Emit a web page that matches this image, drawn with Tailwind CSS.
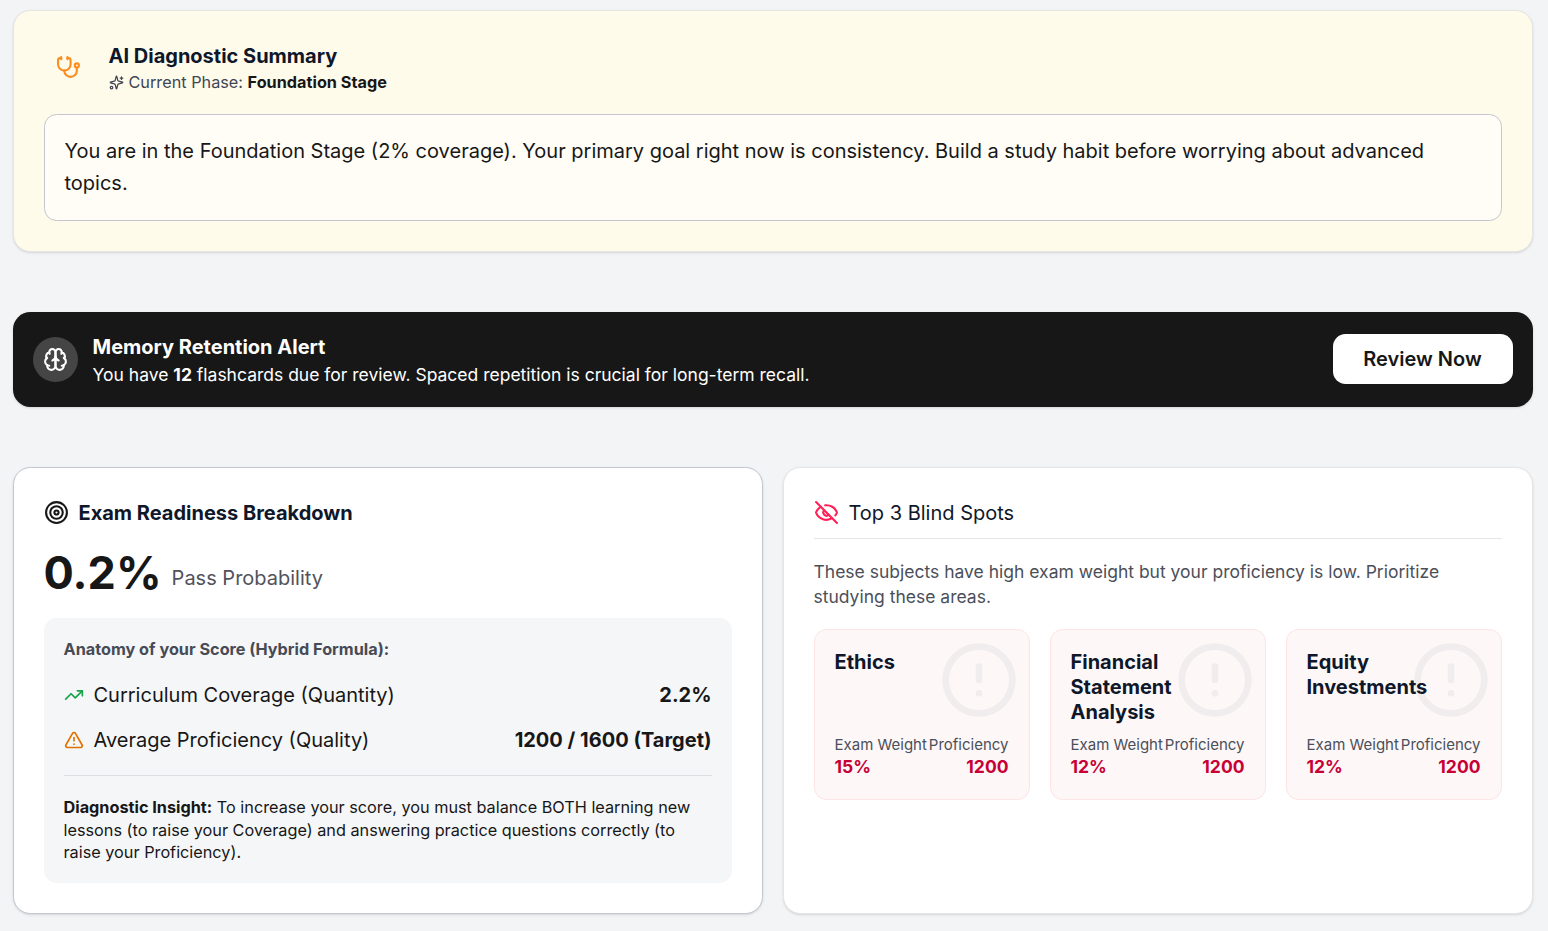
<!DOCTYPE html>
<html lang="en">
<head>
<meta charset="utf-8">
<title>Diagnostic Summary</title>
<script src="https://cdn.jsdelivr.net/npm/@tailwindcss/browser@4"></script>
</head>
<body class="h-[931px] overflow-hidden bg-[#f3f4f6] font-['Inter',sans-serif] text-[20px] text-[#171717]">
<svg class="hidden">
  <symbol id="alert" viewBox="0 0 24 24"><circle cx="12" cy="12" r="10"/><line x1="12" x2="12" y1="8" y2="12"/><line x1="12" x2="12.01" y1="16" y2="16"/></symbol>
</svg>
<main class="flex flex-col gap-[60px] pt-[10px] pr-[15.5px] pl-[12.5px]">
  <section class="h-[242px] rounded-[17.5px] border border-[#e5e5e5] bg-[#fffbeb] px-[30px] pt-[31px] pb-[30px] shadow-sm">
    <div class="flex h-[52px] items-start gap-[15px]">
      <div class="flex size-[50px] shrink-0 items-center justify-center text-[#fb8c1e]">
        <svg class="mr-[1px] size-[25px]" viewBox="0 0 24 24" fill="none" stroke="currentColor" stroke-width="2" stroke-linecap="round" stroke-linejoin="round"><path d="M11 2v2"/><path d="M5 2v2"/><path d="M5 3H4a2 2 0 0 0-2 2v4a6 6 0 0 0 12 0V5a2 2 0 0 0-2-2h-1"/><path d="M8 15a6 6 0 0 0 12 0v-3"/><circle cx="20" cy="10" r="2"/></svg>
      </div>
      <div>
        <h2 class="text-[20px] leading-[28px] font-bold text-[#0f172a]">AI Diagnostic Summary</h2>
        <p class="mt-px flex items-center text-[16.25px] leading-[23px] text-[#404654]">
          <svg class="mr-[5px] size-[15px]" viewBox="0 0 24 24" fill="none" stroke="currentColor" stroke-width="2" stroke-linecap="round" stroke-linejoin="round"><path d="M9.937 15.5A2 2 0 0 0 8.5 14.063l-6.135-1.582a.5.5 0 0 1 0-.962L8.5 9.936A2 2 0 0 0 9.937 8.5l1.582-6.135a.5.5 0 0 1 .963 0L14.063 8.5A2 2 0 0 0 15.5 9.937l6.135 1.581a.5.5 0 0 1 0 .964L15.5 14.063a2 2 0 0 0-1.437 1.437l-1.582 6.135a.5.5 0 0 1-.963 0z"/><path d="M20 3v4"/><path d="M22 5h-4"/><circle cx="4" cy="20" r="2"/></svg>
          <span>Current Phase: <strong class="font-bold text-[#171717]">Foundation Stage</strong></span>
        </p>
      </div>
    </div>
    <div class="mt-[20px] h-[107px] rounded-[12.5px] border border-[#c3c6d1] bg-[#fffdf6] p-[20px] leading-[32px]">You are in the Foundation Stage (2% coverage). Your primary goal right now is consistency. Build a study habit before worrying about advanced topics.</div>
  </section>

  <section class="flex h-[95px] items-center rounded-[17.5px] bg-[#171717] px-[20px] text-white shadow-sm">
    <div class="flex size-[45px] shrink-0 items-center justify-center rounded-full bg-[#454545]">
      <svg class="size-[25px]" viewBox="0 0 24 24" fill="none" stroke="currentColor" stroke-width="2" stroke-linecap="round" stroke-linejoin="round"><path d="M12 5a3 3 0 1 0-5.997.125 4 4 0 0 0-2.526 5.77 4 4 0 0 0 .556 6.588A4 4 0 1 0 12 18Z"/><path d="M12 5a3 3 0 1 1 5.997.125 4 4 0 0 1 2.526 5.77 4 4 0 0 1-.556 6.588A4 4 0 1 1 12 18Z"/><path d="M15 13a4.5 4.5 0 0 1-3-4 4.5 4.5 0 0 1-3 4"/><path d="M17.599 6.5a3 3 0 0 0 .399-1.375"/><path d="M6.003 5.125A3 3 0 0 0 6.401 6.5"/><path d="M3.477 10.896a4 4 0 0 1 .585-.396"/><path d="M19.938 10.5a4 4 0 0 1 .585.396"/><path d="M6 18a4 4 0 0 1-1.967-.516"/><path d="M19.967 17.484A4 4 0 0 1 18 18"/></svg>
    </div>
    <div class="ml-[15px] grow">
      <h2 class="text-[20px] leading-[30px] font-bold">Memory Retention Alert</h2>
      <p class="text-[17.5px] leading-[26px]">You have <strong class="font-bold">12</strong> flashcards due for review. Spaced repetition is crucial for long-term recall.</p>
    </div>
    <button class="mb-px h-[50px] w-[180px] rounded-[12.5px] bg-white text-[20px] font-semibold text-[#171717]">Review Now</button>
  </section>

  <div class="grid h-[447px] grid-cols-2 gap-[20px]">
    <section class="rounded-[17.5px] border border-[#c3c6d1] bg-white p-[30px] shadow-sm">
      <h2 class="flex h-[30px] items-center gap-[10px] text-[20px] font-bold text-[#0f172a]">
        <svg class="mb-[1px] size-[25px] text-[#171717]" viewBox="0 0 24 24" fill="none" stroke="currentColor" stroke-width="2" stroke-linecap="round" stroke-linejoin="round"><circle cx="12" cy="12" r="10"/><circle cx="12" cy="12" r="6"/><circle cx="12" cy="12" r="2"/></svg>
        Exam Readiness Breakdown
      </h2>
      <div class="mt-[20px] flex h-[50px] items-end gap-[10px]">
        <span class="text-[45px] leading-[50px] font-bold">0.2%</span>
        <span class="pb-[5px] leading-[30px] text-[#52525b]">Pass Probability</span>
      </div>
      <div class="mt-[20px] h-[265px] rounded-[12.5px] bg-[#f5f6f8] p-[20px]">
        <p class="text-[16.25px] leading-[23px] font-bold text-[#474b55]">Anatomy of your Score (Hybrid Formula):</p>
        <div class="mt-[19px] flex h-[30px] items-center gap-[10px]">
          <svg class="size-[20px] text-[#16a34a]" viewBox="0 0 24 24" fill="none" stroke="currentColor" stroke-width="2" stroke-linecap="round" stroke-linejoin="round"><polyline points="22 7 13.5 15.5 8.5 10.5 2 17"/><polyline points="16 7 22 7 22 13"/></svg>
          <span class="grow">Curriculum Coverage (Quantity)</span>
          <strong class="font-bold">2.2%</strong>
        </div>
        <div class="mt-[15px] flex h-[30px] items-center gap-[10px]">
          <svg class="size-[20px] text-[#e17100]" viewBox="0 0 24 24" fill="none" stroke="currentColor" stroke-width="2" stroke-linecap="round" stroke-linejoin="round"><path d="m21.73 18-8-14a2 2 0 0 0-3.48 0l-8 14A2 2 0 0 0 4 21h16a2 2 0 0 0 1.73-3"/><path d="M12 9v4"/><path d="M12 17h.01"/></svg>
          <span class="grow">Average Proficiency (Quality)</span>
          <strong class="font-bold">1200 / 1600 (Target)</strong>
        </div>
        <p class="mt-[20px] border-t border-[#dcdee2] pt-[20px] text-[16.25px] leading-[22.5px]"><strong class="font-bold">Diagnostic Insight:</strong> To increase your score, you must balance BOTH learning new lessons (to raise your Coverage) and answering practice questions correctly (to raise your Proficiency).</p>
      </div>
    </section>

    <section class="rounded-[17.5px] border border-[#e5e5e5] bg-white p-[30px] shadow-sm">
      <h2 class="flex h-[41px] items-start gap-[10px] border-b border-[#e5e5e5] text-[20px] leading-[30px] text-[#0f172a]">
        <svg class="mt-[2px] size-[25px] text-[#ff2056]" viewBox="0 0 24 24" fill="none" stroke="currentColor" stroke-width="2" stroke-linecap="round" stroke-linejoin="round"><path d="M10.733 5.076a10.744 10.744 0 0 1 11.205 6.575 1 1 0 0 1 0 .696 10.747 10.747 0 0 1-1.444 2.49"/><path d="M14.084 14.158a3 3 0 0 1-4.242-4.242"/><path d="M17.479 17.499a10.75 10.75 0 0 1-15.417-5.151 1 1 0 0 1 0-.696 10.75 10.75 0 0 1 4.446-5.143"/><path d="m2 2 20 20"/></svg>
        Top 3 Blind Spots
      </h2>
      <p class="mt-[20px] text-[17.5px] leading-[25px] text-[#4b4f5a]">These subjects have high exam weight but your proficiency is low. Prioritize studying these areas.</p>
      <div class="mt-[20px] grid grid-cols-3 gap-[20px]">
        <article class="relative flex h-[171px] flex-col justify-between rounded-[12.5px] border border-[#ffe4e6] bg-[#fdf7f8] p-[20px]">
          <svg class="absolute top-[10px] right-[10px] size-[80px] text-[#f1ecee]" fill="none" stroke="currentColor" stroke-width="2" stroke-linecap="round" stroke-linejoin="round"><use href="#alert"/></svg>
          <h3 class="relative leading-[25px] font-bold text-[#0f172a]">Ethics</h3>
          <dl class="relative flex justify-between text-[15px] leading-[24px] text-[#4b4f5a]">
            <div><dt>Exam Weight</dt><dd class="-mt-[3px] text-[17.5px] leading-[25px] font-bold text-[#c70036]">15%</dd></div>
            <div class="text-right"><dt>Proficiency</dt><dd class="-mt-[3px] text-[17.5px] leading-[25px] font-bold text-[#c70036]">1200</dd></div>
          </dl>
        </article>
        <article class="relative flex h-[171px] flex-col justify-between rounded-[12.5px] border border-[#ffe4e6] bg-[#fdf7f8] p-[20px]">
          <svg class="absolute top-[10px] right-[10px] size-[80px] text-[#f1ecee]" fill="none" stroke="currentColor" stroke-width="2" stroke-linecap="round" stroke-linejoin="round"><use href="#alert"/></svg>
          <h3 class="relative leading-[25px] font-bold text-[#0f172a]">Financial Statement Analysis</h3>
          <dl class="relative flex justify-between text-[15px] leading-[24px] text-[#4b4f5a]">
            <div><dt>Exam Weight</dt><dd class="-mt-[3px] text-[17.5px] leading-[25px] font-bold text-[#c70036]">12%</dd></div>
            <div class="text-right"><dt>Proficiency</dt><dd class="-mt-[3px] text-[17.5px] leading-[25px] font-bold text-[#c70036]">1200</dd></div>
          </dl>
        </article>
        <article class="relative flex h-[171px] flex-col justify-between rounded-[12.5px] border border-[#ffe4e6] bg-[#fdf7f8] p-[20px]">
          <svg class="absolute top-[10px] right-[10px] size-[80px] text-[#f1ecee]" fill="none" stroke="currentColor" stroke-width="2" stroke-linecap="round" stroke-linejoin="round"><use href="#alert"/></svg>
          <h3 class="relative leading-[25px] font-bold text-[#0f172a]">Equity Investments</h3>
          <dl class="relative flex justify-between text-[15px] leading-[24px] text-[#4b4f5a]">
            <div><dt>Exam Weight</dt><dd class="-mt-[3px] text-[17.5px] leading-[25px] font-bold text-[#c70036]">12%</dd></div>
            <div class="text-right"><dt>Proficiency</dt><dd class="-mt-[3px] text-[17.5px] leading-[25px] font-bold text-[#c70036]">1200</dd></div>
          </dl>
        </article>
      </div>
    </section>
  </div>
</main>
</body>
</html>
